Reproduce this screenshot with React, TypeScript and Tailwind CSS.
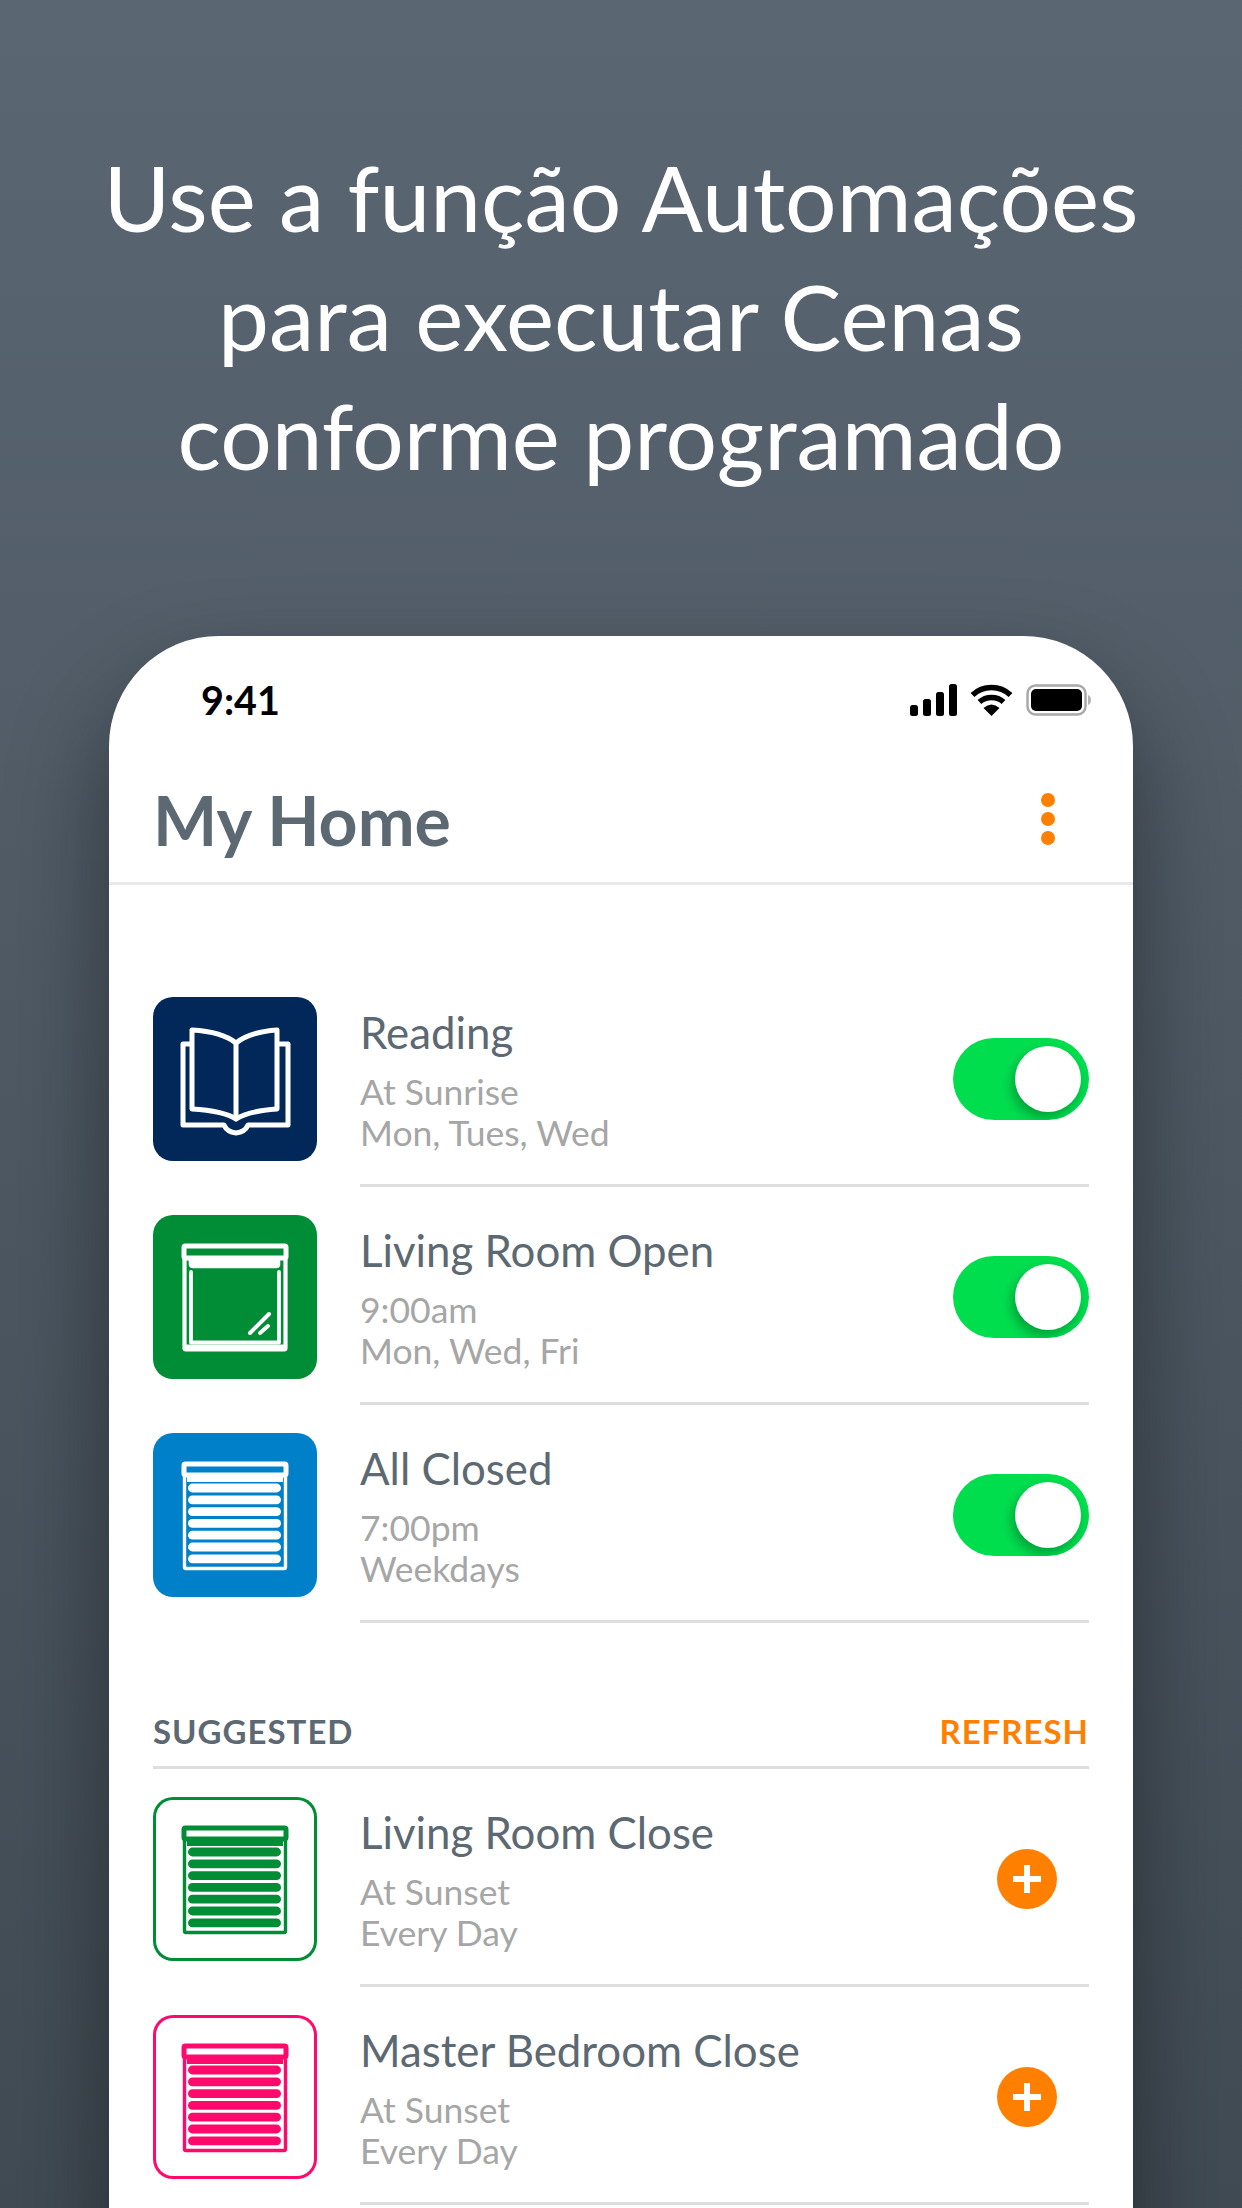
const font = { fontFamily: '"Lato", "Liberation Sans", sans-serif' };

function BookIcon() {
  return (
    <svg viewBox="0 0 164 164" className="w-full h-full" fill="none" stroke="currentColor" strokeWidth="5" strokeLinejoin="round" strokeLinecap="round">
      <path d="M38 47H30V128H71Q74 135 83 136Q92 135 95 128H135V47H127" />
      <path d="M39 33C56 34 72 37 83 46C94 37 110 34 124 33V112C110 113 94 115 83 122C72 115 56 113 39 112Z" />
      <path d="M83 46V122" />
    </svg>
  );
}

function RollerIcon() {
  return (
    <svg viewBox="0 0 164 164" className="w-full h-full" fill="none" stroke="currentColor" strokeLinecap="round" strokeLinejoin="round">
      <rect x="31" y="31" width="102" height="12" rx="1.5" strokeWidth="5" />
      <path d="M36 44H127V50Q127 53 123 53H40Q36 53 36 50Z" fill="currentColor" strokeWidth="0.5" />
      <path d="M31.5 45V133Q31.5 134.5 33 134.5H131Q132.5 134.5 132.5 133V45" strokeWidth="4.2" />
      <path d="M38 57V127.5H126V57" strokeWidth="3.8" />
      <rect x="33" y="129.5" width="98" height="5" fill="currentColor" strokeWidth="0" />
      <path d="M97 118L116 99" strokeWidth="4" />
      <path d="M107 118L115 111" strokeWidth="4" />
    </svg>
  );
}

function BlindIcon() {
  const slats = [50.6, 62.4, 74.2, 86, 97.8, 109.6, 121.4];
  return (
    <svg viewBox="0 0 164 164" className="w-full h-full" fill="none" stroke="currentColor" strokeLinecap="round" strokeLinejoin="round">
      <rect x="31" y="31" width="102" height="11" rx="1.5" strokeWidth="5" />
      <rect x="34" y="42" width="96" height="7" fill="currentColor" strokeWidth="0" />
      <path d="M31.5 44V134Q31.5 135.5 33 135.5H131Q132.5 135.5 132.5 134V44" strokeWidth="3.4" />
      {slats.map((y) => (
        <rect key={y} x="35" y={y} width="93" height="8.8" rx="4.4" fill="currentColor" strokeWidth="0" />
      ))}
    </svg>
  );
}

function Toggle() {
  return (
    <div className="w-[136px] h-[82px] rounded-full bg-[#00de4e] overflow-hidden flex items-center justify-end pr-[8px] shrink-0">
      <div className="w-[66px] h-[66px] rounded-full bg-white shadow-[-3px_6px_12px_rgba(0,0,0,0.28)]" />
    </div>
  );
}

function Plus() {
  return (
    <div className="w-[136px] flex justify-end pr-[32px] shrink-0">
      <div className="w-[60px] h-[60px] rounded-full bg-[#ff8000] flex items-center justify-center relative">
        <div className="w-[28px] h-[6px] bg-white" />
        <div className="absolute w-[6px] h-[28px] bg-white" />
      </div>
    </div>
  );
}

function Row({ icon, tile, title, sub1, sub2, action }: { icon: React.ReactNode; tile: string; title: string; sub1: string; sub2: string; action: React.ReactNode }) {
  return (
    <div className="flex h-[218px] pl-[44px] pr-[44px]">
      <div className={`w-[164px] h-[164px] rounded-[20px] shrink-0 ${tile}`}>{icon}</div>
      <div className="ml-[43px] flex-1 h-[190px] border-b-[3px] border-[#dedede] flex items-start justify-between">
        <div className="flex flex-col">
          <div className="text-[43.8px] leading-[50px] text-[#5c6973] mt-[10px]">{title}</div>
          <div className="text-[35.5px] leading-[41px] text-[#a6a6a6] mt-[14px]">{sub1}</div>
          <div className="text-[35.5px] leading-[41px] text-[#a6a6a6]">{sub2}</div>
        </div>
        <div className="h-[164px] flex items-center">{action}</div>
      </div>
    </div>
  );
}

export default function App() {
  return (
    <div style={font} className="w-[1242px] h-[2208px] overflow-hidden flex flex-col items-center bg-gradient-to-b from-[#5a6672] to-[#414b54]">
      <h1 className="mt-[137px] text-white text-[91px] leading-[119px] font-normal text-center">
        <div>Use a função Automações</div>
        <div>para executar Cenas</div>
        <div>conforme programado</div>
      </h1>
      <div className="mt-[142px] w-[1024px] shrink-0 h-[1700px] bg-white rounded-t-[110px] shadow-[0_50px_100px_rgba(0,0,0,0.42)]">
        <div className="h-[128px] flex items-center justify-between pl-[92px] pr-[42px] pt-[0px]">
          <span className="text-[39.5px] font-bold text-black">9:41</span>
          <div className="flex items-center gap-[13px]">
            <svg width="47" height="32" viewBox="0 0 47 32" fill="#000">
              <rect x="0" y="21" width="8" height="11" rx="2.5" />
              <rect x="13" y="15" width="8" height="17" rx="2.5" />
              <rect x="26" y="8" width="8" height="24" rx="2.5" />
              <rect x="39" y="0" width="8" height="32" rx="2.5" />
            </svg>
            <svg width="43" height="32" viewBox="0 0 43 32" fill="none" stroke="#000" strokeWidth="5.5">
              <path d="M2.5 11C13 1 30 1 40.5 11" />
              <path d="M9.5 18C16 12 27 12 33.5 18" />
              <path d="M21.5 32L13.5 24Q21.5 17 29.5 24Z" fill="#000" stroke="none" />
            </svg>
            <svg width="65" height="32" viewBox="0 0 65 32">
              <rect x="1.5" y="1.5" width="58" height="29" rx="8" fill="none" stroke="#a9a9a9" strokeWidth="2.5" />
              <rect x="5" y="5" width="51" height="22" rx="5" fill="#000" />
              <path d="M62 11Q65 12 65 16Q65 20 62 21Z" fill="#b5b5b5" />
            </svg>
          </div>
        </div>
        <div className="h-[121px] border-b-[3px] border-[#e9e9e9] flex items-start justify-between pl-[44px] pr-[78px] pt-[0px]">
          <span className="text-[68px] leading-[78px] font-bold text-[#5c6973] mt-[17px]">My Home</span>
          <div className="flex flex-col gap-[5px] mt-[29px]">
            <div className="w-[14px] h-[14px] rounded-full bg-[#ff8000]" />
            <div className="w-[14px] h-[14px] rounded-full bg-[#ff8000]" />
            <div className="w-[14px] h-[14px] rounded-full bg-[#ff8000]" />
          </div>
        </div>
        <div className="mt-[112px]">
          <Row icon={<BookIcon />} tile="bg-[#012858] text-white" title="Reading" sub1="At Sunrise" sub2="Mon, Tues, Wed" action={<Toggle />} />
          <Row icon={<RollerIcon />} tile="bg-[#008d36] text-white" title="Living Room Open" sub1="9:00am" sub2="Mon, Wed, Fri" action={<Toggle />} />
          <Row icon={<BlindIcon />} tile="bg-[#0080c9] text-white" title="All Closed" sub1="7:00pm" sub2="Weekdays" action={<Toggle />} />
        </div>
        <div className="mx-[44px] h-[118px] border-b-[3px] border-[#dedede] flex items-start justify-between pt-[60px]">
          <span className="text-[33px] leading-[40px] font-bold tracking-[1px] text-[#5c6973]">SUGGESTED</span>
          <span className="text-[33px] leading-[40px] font-bold tracking-[1px] text-[#ff8000]">REFRESH</span>
        </div>
        <div className="mt-[28px]">
          <Row icon={<BlindIcon />} tile="shadow-[inset_0_0_0_3px_#008d36] text-[#008d36]" title="Living Room Close" sub1="At Sunset" sub2="Every Day" action={<Plus />} />
          <Row icon={<BlindIcon />} tile="shadow-[inset_0_0_0_3px_#ff0a6c] text-[#ff0a6c]" title="Master Bedroom Close" sub1="At Sunset" sub2="Every Day" action={<Plus />} />
        </div>
      </div>
    </div>
  );
}
